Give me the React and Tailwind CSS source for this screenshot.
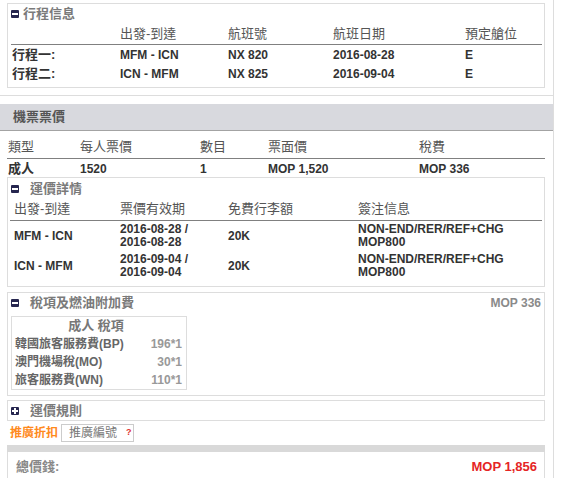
import React from "react";

const font = { fontFamily: '"Liberation Sans", "Noto Sans CJK TC", sans-serif' };

function ToggleIcon({ open = true }) {
  return (
    <span className="inline-flex w-[8px] h-[8px] bg-[#26264f] rounded-[1px] items-center justify-center shrink-0">
      <span className="relative block w-[6px] h-[2px] bg-white">
        {!open && <span className="absolute left-[2px] top-[-2px] w-[2px] h-[6px] bg-white" />}
      </span>
    </span>
  );
}

function SectionTitle({ children, open = true, gap = "ml-[11px]" }) {
  return (
    <div className="flex items-center">
      <ToggleIcon open={open} />
      <span className={`${gap} text-[13px] font-bold text-[#7a7a7a]`}>{children}</span>
    </div>
  );
}

const trips = [
  { name: "行程一:", route: "MFM - ICN", flight: "NX 820", date: "2016-08-28", cls: "E" },
  { name: "行程二:", route: "ICN - MFM", flight: "NX 825", date: "2016-09-04", cls: "E" },
];

const fares = [
  { route: "MFM - ICN", valid: ["2016-08-28 /", "2016-08-28"], bag: "20K", note: ["NON-END/RER/REF+CHG", "MOP800"] },
  { route: "ICN - MFM", valid: ["2016-09-04 /", "2016-09-04"], bag: "20K", note: ["NON-END/RER/REF+CHG", "MOP800"] },
];

const taxes = [
  { name: "韓國旅客服務費(BP)", amt: "196*1" },
  { name: "澳門機場稅(MO)", amt: "30*1" },
  { name: "旅客服務費(WN)", amt: "110*1" },
];

export default function App() {
  return (
    <div className="w-[562px] h-[478px] bg-white overflow-hidden" style={font}>
      <div className="w-[554px] h-full border-r border-[#dddddd]">
        {/* itinerary */}
        <div className="pt-[3px] pb-[7px] border-b border-[#dddddd]">
          <div className="ml-[7px] w-[538px] border border-[#dddddd] pb-[4px]">
            <div className="h-[18px] flex items-center pl-[3px] pt-[1px]">
              <SectionTitle gap="ml-[4px]">行程信息</SectionTitle>
            </div>
            <div className="ml-[3px] mr-[2px]">
              <div className="grid grid-cols-[109px_108px_105px_132px_1fr] h-[23px] items-end pb-[1px] border-b border-[#808080] text-[13px] text-[#555]">
                <span />
                <span>出發-到達</span>
                <span>航班號</span>
                <span>航班日期</span>
                <span>預定艙位</span>
              </div>
              {trips.map((t) => (
                <div
                  key={t.name}
                  className="grid grid-cols-[109px_108px_105px_132px_1fr] h-[19px] items-center text-[12px] font-bold text-[#333]"
                >
                  <span className="text-[13px] pl-[1px]">{t.name}</span>
                  <span>{t.route}</span>
                  <span>{t.flight}</span>
                  <span>{t.date}</span>
                  <span>{t.cls}</span>
                </div>
              ))}
            </div>
          </div>
        </div>

        {/* fare */}
        <div className="pt-[8px]">
          <div className="h-[27px] bg-[#d8d9de] border-b border-[#a3a3a3] flex items-center pl-[13px]">
            <span className="text-[13px] font-bold text-[#555]">機票票價</span>
          </div>
          <div className="ml-[7px] w-[538px]">
            <div className="grid grid-cols-[73px_120px_68px_151px_1fr] h-[28px] items-end pb-[2px] border-b border-[#808080] text-[13px] text-[#555]">
              <span className="pl-[1px]">類型</span>
              <span>每人票價</span>
              <span>數目</span>
              <span>票面價</span>
              <span>稅費</span>
            </div>
            <div className="grid grid-cols-[73px_120px_68px_151px_1fr] h-[18px] items-center text-[12px] font-bold text-[#333]">
              <span className="text-[13px] pl-[1px]">成人</span>
              <span>1520</span>
              <span>1</span>
              <span>MOP 1,520</span>
              <span>MOP 336</span>
            </div>

            {/* fare details */}
            <div className="border border-[#dddddd] pb-[5px]">
              <div className="h-[19px] flex items-center pl-[3px] pt-[2px]">
                <SectionTitle>運價詳情</SectionTitle>
              </div>
              <div className="ml-[2px] mr-[2px]">
                <div className="grid grid-cols-[110px_108px_130px_1fr] h-[24px] items-end pb-[2px] border-b border-[#808080] text-[13px] text-[#555]">
                  <span className="pl-[4px]">出發-到達</span>
                  <span>票價有效期</span>
                  <span>免費行李額</span>
                  <span>簽注信息</span>
                </div>
                {fares.map((f) => (
                  <div
                    key={f.route}
                    className="grid grid-cols-[110px_108px_130px_1fr] h-[30px] items-center text-[12px] font-bold text-[#333] leading-[13px]"
                  >
                    <span className="pl-[4px]">{f.route}</span>
                    <span>
                      {f.valid[0]}
                      <br />
                      {f.valid[1]}
                    </span>
                    <span>{f.bag}</span>
                    <span>
                      {f.note[0]}
                      <br />
                      {f.note[1]}
                    </span>
                  </div>
                ))}
              </div>
            </div>

            {/* taxes */}
            <div className="mt-[5px] border border-[#dddddd] pb-[5px]">
              <div className="h-[19px] flex items-center justify-between pl-[3px] pr-[3px] pt-[1px]">
                <SectionTitle>稅項及燃油附加費</SectionTitle>
                <span className="text-[12px] font-bold text-[#8a8a8a]">MOP 336</span>
              </div>
              <div className="mt-[4px] ml-[3px] w-[176px] border border-[#dddddd] text-[12px] font-bold">
                <div className="h-[18px] flex items-center justify-center pr-[6px] text-[13px] text-[#777]">成人 稅項</div>
                {taxes.map((t) => (
                  <div key={t.name} className="h-[18px] flex items-center justify-between pl-[3px] pr-[4px]">
                    <span className="text-[#666]">{t.name}</span>
                    <span className="text-[#999]">{t.amt}</span>
                  </div>
                ))}
              </div>
            </div>

            {/* fare rules */}
            <div className="mt-[4px] h-[21px] border border-[#dddddd] flex items-center pl-[3px]">
              <SectionTitle open={false}>運價規則</SectionTitle>
            </div>
          </div>

          {/* promotion */}
          <div className="mt-[3px] h-[18px] flex items-center pl-[10px]">
            <span className="text-[12px] font-bold text-[#ff8a1c] whitespace-nowrap">推廣折扣</span>
            <div className="ml-[3px] w-[73px] h-[18px] border border-[#cccccc] flex items-center pl-[7px] whitespace-nowrap shrink-0">
              <span className="text-[12px] text-[#777]">推廣編號</span>
              <span className="ml-[9px] text-[9px] font-bold text-[#e03030]">?</span>
            </div>
          </div>

          {/* total */}
          <div className="mt-[3px] ml-[7px] w-[538px]">
            <div className="h-[7px] bg-[#d9d9d9]" />
            <div className="h-[30px] border-x border-[#dddddd] flex items-center justify-between pl-[8px] pr-[7px]">
              <span className="text-[13px] font-bold text-[#888]">總價錢:</span>
              <span className="text-[13px] font-bold text-[#e52525]">MOP 1,856</span>
            </div>
          </div>
        </div>
      </div>
    </div>
  );
}
